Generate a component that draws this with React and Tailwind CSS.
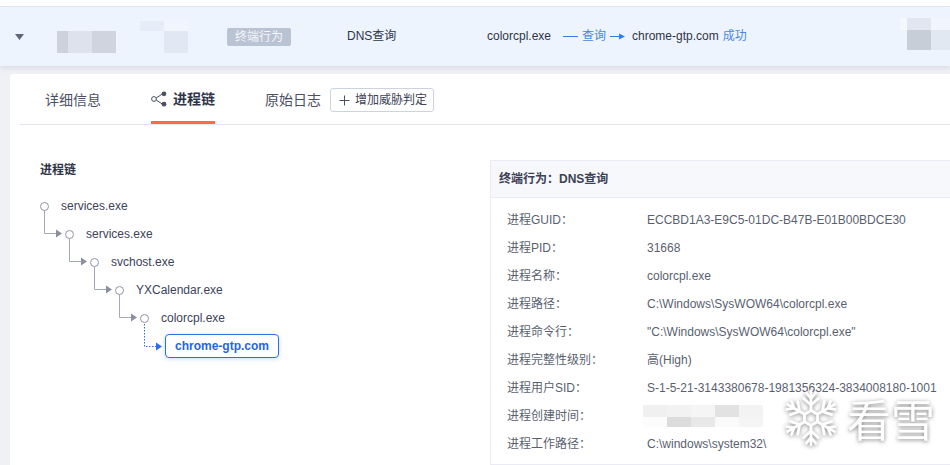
import React from "react";

function Mosaic({ w, h, rects, className }) {
  return (
    <svg width={w} height={h} viewBox={`0 0 ${w} ${h}`} className={className} shapeRendering="crispEdges">
      {rects.map((r, i) => (
        <rect key={i} x={r[0]} y={r[1]} width={r[2]} height={r[3]} fill={r[4]} />
      ))}
    </svg>
  );
}

function Connector() {
  return (
    <svg width="26" height="30" viewBox="0 0 26 30" className="absolute left-[-22.5px] top-[-21.5px]">
      <path d="M0.5 1 V24.5 H13" fill="none" stroke="#a3a8b8" strokeWidth="1" />
      <path d="M12 20.5 L18 24.5 L12 28.5 Z" fill="#8b90a0" />
    </svg>
  );
}

function Node({ label, ml, first }) {
  return (
    <div className={`flex items-center h-7 ${ml}`}>
      <span className="relative flex-none w-[9px] h-[9px] rounded-full border-[1.5px] border-[#8f94a3] bg-white">
        {!first && <Connector />}
      </span>
      <span className="ml-[12px] text-[12px] text-[#3d4257]">{label}</span>
    </div>
  );
}

const rows = [
  ["进程GUID：", "ECCBD1A3-E9C5-01DC-B47B-E01B00BDCE30"],
  ["进程PID：", "31668"],
  ["进程名称：", "colorcpl.exe"],
  ["进程路径：", "C:\\Windows\\SysWOW64\\colorcpl.exe"],
  ["进程命令行：", "\"C:\\Windows\\SysWOW64\\colorcpl.exe\""],
  ["进程完整性级别：", "高(High)"],
  ["进程用户SID：", "S-1-5-21-3143380678-1981356324-3834008180-1001"],
  ["进程创建时间：", null],
  ["进程工作路径：", "C:\\windows\\system32\\"],
];

function Snowflake() {
  const arm = (
    <g>
      <path d="M0 -9 V-29" />
      <path d="M0 -14 L-8 -21 M0 -14 L8 -21" />
      <path d="M0 -21 L-5 -27 M0 -21 L5 -27" />
    </g>
  );
  return (
    <svg width="56" height="60" viewBox="-30 -32 60 64" className="drop-shadow-[0_1px_2px_rgba(0,0,0,0.45)]">
      <g fill="none" stroke="#ffffff" strokeWidth="3" strokeLinecap="round">
        {[0, 60, 120, 180, 240, 300].map((a) => (
          <g key={a} transform={`rotate(${a})`}>{arm}</g>
        ))}
        <path d="M0 -8 L7 -4 L7 4 L0 8 L-7 4 L-7 -4 Z" />
      </g>
    </svg>
  );
}

export default function App() {
  return (
    <div className="relative w-[950px] h-[465px] overflow-hidden bg-[#f0f1f5] font-['Liberation_Sans','Noto_Sans_CJK_SC',sans-serif] text-[12px]">
      <div className="h-[7px] bg-white border-b border-[#e6e9f2]" />
      <div className="h-[59px] bg-[#edf4fe] flex items-center shadow-[0_2px_5px_rgba(170,175,195,0.35)] relative text-[#2f3447]">
        <svg width="9" height="6" viewBox="0 0 9 6" className="ml-[15px] flex-none mt-[1px]">
          <path d="M0 0 H9 L4.5 6 Z" fill="#5f6675" />
        </svg>
        <Mosaic
          w={131}
          h={32}
          className="ml-[33px] flex-none"
          rects={[
            [0, 10, 11, 22, "#cdd1dc"],
            [11, 10, 24, 22, "#dde2ec"],
            [35, 10, 24, 22, "#cfd4de"],
            [83, 0, 24, 10, "#e6edf8"],
            [107, 0, 24, 10, "#f1f5fd"],
            [107, 10, 24, 22, "#e2e8f3"],
          ]}
        />
        <span className="ml-[39px] w-[64px] h-[18px] flex-none flex items-center justify-center rounded-[2px] bg-[#b9c3d3] text-[#f4f6fa]">终端行为</span>
        <span className="ml-[56px] w-[140px] flex-none mb-[1px]">DNS查询</span>
        <span className="w-[76px] flex-none mb-[1px]">colorcpl.exe</span>
        <span className="w-[15px] h-px bg-[#2f7cf0] flex-none mb-[1px]" />
        <span className="ml-[4px] text-[#4a86e8] flex-none mb-[1px]">查询</span>
        <svg width="15" height="7" viewBox="0 0 15 7" className="ml-[4px] flex-none mb-[1px]">
          <path d="M0 3.5 H10" stroke="#2f7cf0" strokeWidth="1" />
          <path d="M9 0.5 L15 3.5 L9 6.5 Z" fill="#2f7cf0" />
        </svg>
        <span className="ml-[7px] flex-none mb-[1px]">chrome-gtp.com</span>
        <span className="ml-[4px] text-[#4a86e8] flex-none mb-[1px]">成功</span>
        <Mosaic
          w={50}
          h={32}
          className="absolute right-0 top-[11px]"
          rects={[
            [0, 0, 7, 12, "#f3f7fe"],
            [7, 0, 24, 12, "#e1e6f0"],
            [31, 0, 19, 12, "#f1f5fd"],
            [7, 12, 24, 20, "#c8ced8"],
            [31, 12, 19, 20, "#e2e8f2"],
          ]}
        />
      </div>

      <div className="mt-[8px] ml-[10px] h-[391px] bg-white rounded-tl-[4px] flex flex-col">
        <div className="ml-[10px] h-[51px] flex-none border-b border-[#e3e6f0] flex text-[#4b5064]">
          <div className="ml-[25px] w-[106px] pt-[16px] text-[14px] leading-[20px] whitespace-nowrap">详细信息</div>
          <div className="w-[64px] h-[50px] border-b-[3px] border-[#ff6b45] flex items-start pt-[15px] flex-none">
            <svg width="16" height="16" viewBox="0 0 16 16" className="flex-none mt-[2px]">
              <circle cx="3" cy="8" r="2.4" fill="none" stroke="#4b5064" strokeWidth="1" />
              <path d="M5.2 7 L11 3.2 M5.2 9 L11 12.8" stroke="#4b5064" strokeWidth="1" />
              <circle cx="13" cy="2.8" r="2.4" fill="#4b5064" />
              <circle cx="13" cy="13.2" r="2.4" fill="#4b5064" />
            </svg>
            <span className="ml-[6px] text-[14px] leading-[20px] font-bold text-[#2f3447] whitespace-nowrap">进程链</span>
          </div>
          <div className="ml-[50px] pt-[16px] text-[14px] leading-[20px] w-[56px] whitespace-nowrap">原始日志</div>
          <div className="ml-[9px] mt-[14px] w-[104px] h-[24px] border border-[#ccd2e0] rounded-[3px] flex items-center pl-[8px] text-[#3d4257]">
            <svg width="11" height="11" viewBox="0 0 11 11" className="flex-none">
              <path d="M5.5 0.5 V10.5 M0.5 5.5 H10.5" stroke="#4b5064" strokeWidth="1" />
            </svg>
            <span className="ml-[5px] whitespace-nowrap">增加威胁判定</span>
          </div>
        </div>

        <div className="flex flex-1 min-h-0">
          <div className="w-[480px] flex-none pl-[30px] pt-[37px]">
            <div className="font-bold text-[#2f3447] leading-[16px]">进程链</div>
            <div className="mt-[14px]">
              <Node label="services.exe" ml="ml-0" first />
              <Node label="services.exe" ml="ml-[25px]" />
              <Node label="svchost.exe" ml="ml-[50px]" />
              <Node label="YXCalendar.exe" ml="ml-[75px]" />
              <Node label="colorcpl.exe" ml="ml-[100px]" />
              <div className="relative flex items-center h-7 ml-[125px]">
                <div className="relative flex items-center justify-center w-[114px] h-[24px] rounded-[4px] border border-[#2a6fe8] shadow-[0_1px_4px_rgba(42,111,232,0.25)] font-bold text-[#1f66e0] text-[12px]">
                  chrome-gtp.com
                </div>
                <svg width="22" height="28" viewBox="0 0 22 28" className="absolute left-[-21px] top-[-9px]">
                  <path d="M0.5 1 V23.5 H12" fill="none" stroke="#2a6fe8" strokeWidth="1" strokeDasharray="1.5 1.5" />
                  <path d="M12 19.5 L18 23.5 L12 27.5 Z" fill="#2a6fe8" />
                </svg>
              </div>
            </div>
          </div>

          <div className="w-[470px] flex-none mt-[35px] h-[305px] border border-[#eaebf5] border-r-0 text-[#5a5f70]">
            <div className="h-[37px] bg-[#f7f8fc] border-b border-[#eaebf5] pl-[8px] flex items-center font-bold text-[#3d4257]">
              终端行为：DNS查询
            </div>
            <div className="pt-[8px]">
              {rows.map(([k, v]) => (
                <div key={k} className="flex items-center h-7">
                  <span className="ml-[16px] w-[140px] flex-none">{k}</span>
                  {v ? (
                    <span className="whitespace-nowrap">{v}</span>
                  ) : (
                    <Mosaic
                      w={120}
                      h={22}
                      className="-ml-[4px]"
                      rects={[
                        [0, 0, 24, 12, "#f0f0f0"],
                        [24, 0, 24, 12, "#f2f2f2"],
                        [48, 0, 24, 12, "#f5f5f5"],
                        [72, 0, 24, 12, "#e2e2e2"],
                        [96, 0, 24, 12, "#f3f3f3"],
                        [0, 12, 24, 10, "#fcfcfc"],
                        [24, 12, 24, 10, "#dcdcdc"],
                        [48, 12, 24, 10, "#e8e8e8"],
                        [72, 12, 24, 10, "#fafafa"],
                        [96, 12, 24, 10, "#f5f5f5"],
                      ]}
                    />
                  )}
                </div>
              ))}
            </div>
          </div>
        </div>
      </div>

      <div className="absolute left-[783px] top-[388px] flex items-center">
        <Snowflake />
        <span className="ml-[8px] text-[44px] leading-[60px] font-normal text-white font-['Noto_Sans_CJK_SC',sans-serif] drop-shadow-[0_1px_2px_rgba(0,0,0,0.5)]">看雪</span>
      </div>
    </div>
  );
}
